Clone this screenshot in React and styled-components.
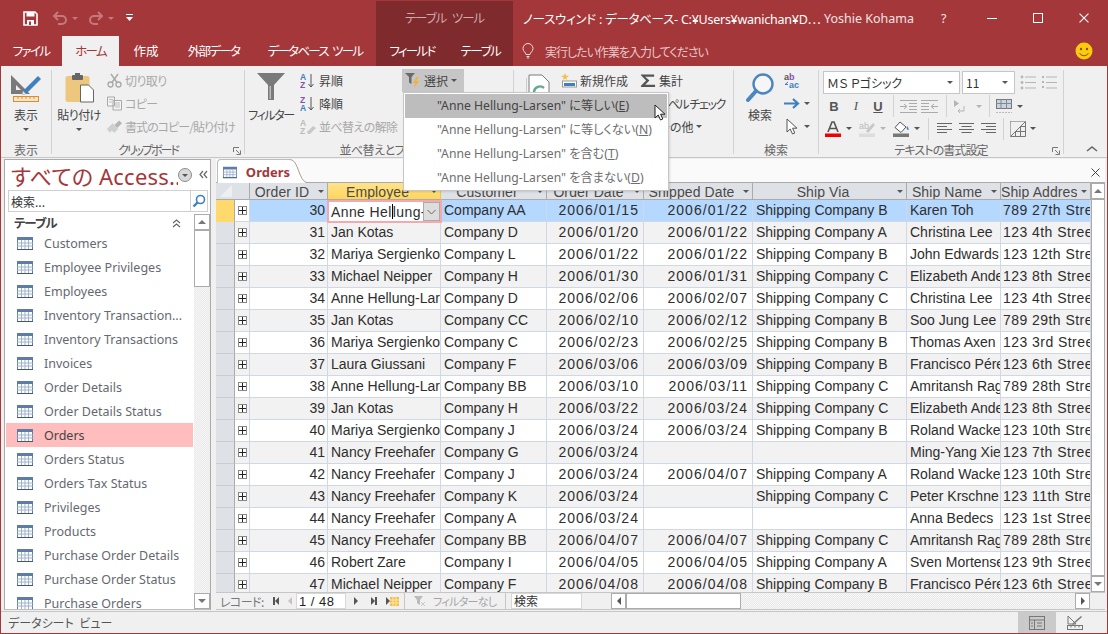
import styled, { createGlobalStyle } from "styled-components";

const RED = "#A4373A";
const UI = `"Noto Sans CJK JP", "Noto Sans", sans-serif`;
const LATIN = `"Noto Sans", "Noto Sans CJK JP", sans-serif`;
const GRID = `"Liberation Sans", "Noto Sans CJK JP", sans-serif`;

const COLS = "19px 15px 78px 113px 106px 97px 109px 154px 94px 90px";

const ROWS = [
    [30, "", "Company AA", "2006/01/15", "2006/01/22", "Shipping Company B", "Karen Toh", "789 27th Street"],
    [31, "Jan Kotas", "Company D", "2006/01/20", "2006/01/22", "Shipping Company A", "Christina Lee", "123 4th Street"],
    [32, "Mariya Sergienko", "Company L", "2006/01/22", "2006/01/22", "Shipping Company B", "John Edwards", "123 12th Street"],
    [33, "Michael Neipper", "Company H", "2006/01/30", "2006/01/31", "Shipping Company C", "Elizabeth Andersen", "123 8th Street"],
    [34, "Anne Hellung-Larsen", "Company D", "2006/02/06", "2006/02/07", "Shipping Company C", "Christina Lee", "123 4th Street"],
    [35, "Jan Kotas", "Company CC", "2006/02/10", "2006/02/12", "Shipping Company B", "Soo Jung Lee", "789 29th Street"],
    [36, "Mariya Sergienko", "Company C", "2006/02/23", "2006/02/25", "Shipping Company B", "Thomas Axen", "123 3rd Street"],
    [37, "Laura Giussani", "Company F", "2006/03/06", "2006/03/09", "Shipping Company B", "Francisco Pérez", "123 6th Street"],
    [38, "Anne Hellung-Larsen", "Company BB", "2006/03/10", "2006/03/11", "Shipping Company C", "Amritansh Raghav", "789 28th Street"],
    [39, "Jan Kotas", "Company H", "2006/03/22", "2006/03/24", "Shipping Company C", "Elizabeth Andersen", "123 8th Street"],
    [40, "Mariya Sergienko", "Company J", "2006/03/24", "2006/03/24", "Shipping Company B", "Roland Wacker", "123 10th Street"],
    [41, "Nancy Freehafer", "Company G", "2006/03/24", "", "", "Ming-Yang Xie", "123 7th Street"],
    [42, "Nancy Freehafer", "Company J", "2006/03/24", "2006/04/07", "Shipping Company A", "Roland Wacker", "123 10th Street"],
    [43, "Nancy Freehafer", "Company K", "2006/03/24", "", "Shipping Company C", "Peter Krschne", "123 11th Street"],
    [44, "Nancy Freehafer", "Company A", "2006/03/24", "", "", "Anna Bedecs", "123 1st Street"],
    [45, "Nancy Freehafer", "Company BB", "2006/04/07", "2006/04/07", "Shipping Company C", "Amritansh Raghav", "789 28th Street"],
    [46, "Robert Zare", "Company I", "2006/04/05", "2006/04/05", "Shipping Company A", "Sven Mortensen", "123 9th Street"],
    [47, "Michael Neipper", "Company F", "2006/04/08", "2006/04/08", "Shipping Company B", "Francisco Pérez", "123 6th Street"],
];

const NAV_ITEMS = [
    "Customers", "Employee Privileges", "Employees", "Inventory Transaction...",
    "Inventory Transactions", "Invoices", "Order Details", "Order Details Status",
    "Orders", "Orders Status", "Orders Tax Status", "Privileges", "Products",
    "Purchase Order Details", "Purchase Order Status", "Purchase Orders",
];

const HEADERS = [
    ["Order ID"], ["Employee", true], ["Customer"], ["Order Date"],
    ["Shipped Date"], ["Ship Via"], ["Ship Name"], ["Ship Address"],
];

const Global = createGlobalStyle`
    html, body { margin: 0; padding: 0; background: #F0F0F0; }
    * { box-sizing: border-box; }
    body { font-family: ${UI}; font-feature-settings: "palt"; }
`;

const Win = styled.div`
    width: 1108px;
    height: 634px;
    display: flex;
    flex-direction: column;
    border: 1px solid ${RED};
    border-top: 0;
    background: #F0F0F0;
    overflow: hidden;
    font-size: 12px;
`;

/* title + tabs */
const Head = styled.header`
    display: flex;
    height: 66px;
    background: ${RED};
    color: #fff;
    margin: 0 -1px;
    flex: none;
`;
const HeadLeft = styled.div`
    width: 376px;
    flex: none;
    display: flex;
    flex-direction: column;
`;
const Qat = styled.div`
    height: 36px;
    display: flex;
    align-items: center;
    padding: 0 0 0 23px;
`;
const QatGap = styled.span`
    display: inline-flex;
    align-items: center;
    margin-left: ${(p) => p.$m}px;
`;
const Tabs = styled.nav`
    display: flex;
    height: 30px;
`;
const Tab = styled.div`
    width: ${(p) => p.$w}px;
    line-height: 30px;
    text-align: center;
    font-size: 12.5px;
    letter-spacing: ${(p) => p.$ls ?? -1.7}px;
    word-spacing: 3px;
    white-space: nowrap;
    color: ${(p) => (p.$on ? RED : "#fff")};
    background: ${(p) => (p.$on ? "#F0F0F0" : "transparent")};
`;
const Context = styled.div`
    width: 137px;
    flex: none;
    margin-top: 1px;
    background: #7F2A2C;
    display: flex;
    flex-direction: column;
`;
const ContextTitle = styled.div`
    height: 35px;
    line-height: 34px;
    text-align: center;
    color: #CFA9AA;
    font-size: 12.5px;
    letter-spacing: -1.1px;
    word-spacing: 4px;
`;
const HeadRight = styled.div`
    flex: 1;
    min-width: 0;
    display: flex;
    flex-direction: column;
`;
const TitleRow = styled.div`
    height: 36px;
    display: flex;
    align-items: center;
    padding-left: 10px;
    font-family: ${LATIN};
    font-size: 12.5px;
    white-space: nowrap;
`;
const DocTitle = styled.div`
    width: 301px;
    flex: none;
    overflow: hidden;
    letter-spacing: -0.25px;
`;
const UserName = styled.div`
    width: 117px;
    flex: none;
    color: #F3E3E3;
`;
const Help = styled.div`
    width: 28px;
    flex: none;
    color: #F3E3E3;
`;
const WinBtn = styled.div`
    width: 46px;
    flex: none;
    display: flex;
    justify-content: center;
`;
const TellRow = styled.div`
    flex: 1;
    display: flex;
    align-items: center;
    padding: 0 15px 0 9px;
    gap: 11px;
    color: #E6C9C9;
    font-size: 12px;
    letter-spacing: -1px;
`;
const TellText = styled.span`
    flex: 1;
`;

/* ribbon */
const Ribbon = styled.section`
    height: 92px;
    flex: none;
    display: flex;
    padding: 4px 0 3px;
    background: #F0F0F0;
    border-bottom: 1px solid #C6C6C6;
    color: #444;
`;
const Group = styled.div`
    width: ${(p) => p.$w}px;
    flex: none;
    display: flex;
    flex-direction: column;
    border-right: 1px solid #D2D2D2;
    position: relative;
`;
const GroupBody = styled.div`
    height: 73px;
    display: flex;
`;
const GroupLabel = styled.div`
    height: 12px;
    line-height: 15px;
    text-align: center;
    color: #666;
    padding-left: ${(p) => p.$pl ?? 0}px;
    letter-spacing: ${(p) => p.$ls ?? 0}px;
    white-space: nowrap;
`;
const Launcher = styled.span`
    position: absolute;
    right: 3px;
    bottom: -1px;
    display: flex;
`;
const BigBtn = styled.div`
    width: ${(p) => p.$w}px;
    margin-left: ${(p) => p.$ml ?? 0}px;
    flex: none;
    display: flex;
    flex-direction: column;
    align-items: center;
    padding-top: 3px;
`;
const BigIcon = styled.div`
    height: 33px;
    display: flex;
    align-items: flex-start;
    justify-content: center;
`;
const BigText = styled.div`
    height: 18px;
    line-height: 18px;
    white-space: nowrap;
    letter-spacing: ${(p) => p.$ls ?? 0}px;
`;
const BigCaret = styled.div`
    height: 10px;
    display: flex;
    align-items: center;
`;
const Col = styled.div`
    width: ${(p) => p.$w}px;
    margin-left: ${(p) => p.$ml ?? 0}px;
    margin-top: -1px;
    flex: none;
    display: flex;
    flex-direction: column;
`;
const SmallBtn = styled.div`
    height: 23px;
    display: flex;
    align-items: center;
    gap: 3px;
    white-space: nowrap;
    letter-spacing: ${(p) => p.$ls ?? 0}px;
    color: ${(p) => (p.$dis ? "#A8A8A8" : "#444")};
`;
const SmallIcon = styled.span`
    width: ${(p) => p.$w ?? 16}px;
    display: flex;
    justify-content: center;
    flex: none;
`;
const PickBtn = styled.div`
    position: relative;
    width: 62px;
    height: 23px;
    display: flex;
    align-items: center;
    gap: 3px;
    padding-left: 3px;
    background: #C6C6C6;
    z-index: 5;
`;
const TextFmt = styled.div`
    display: flex;
    flex-direction: column;
    margin: -1px 0 0 4px;
`;
const ToolRow = styled.div`
    height: ${(p) => p.$h}px;
    display: flex;
    align-items: center;
`;
const FontBox = styled.div`
    width: ${(p) => p.$w}px;
    height: 23px;
    margin-right: 2px;
    display: flex;
    align-items: center;
    justify-content: space-between;
    padding: 0 6px 0 3px;
    background: #fff;
    border: 1px solid #C6C6C6;
    font-size: 12px;
    color: #333;
    white-space: pre;
`;
const Tool = styled.span`
    width: ${(p) => p.$w}px;
    flex: none;
    display: flex;
    justify-content: center;
    align-items: center;
    font: ${(p) => p.$f || "inherit"};
    text-decoration: ${(p) => (p.$u ? "underline" : "none")};
    color: #555;
`;
const ToolSep = styled.span`
    width: 1px;
    height: 22px;
    background: #D2D2D2;
    margin: 0 ${(p) => p.$r}px 0 ${(p) => p.$l}px;
    flex: none;
`;
const Collapse = styled.div`
    flex: 1;
    display: flex;
    align-items: flex-end;
    justify-content: flex-end;
    padding: 0 9px 1px 0;
`;
const Tri = styled.i`
    display: inline-block;
    flex: none;
    width: 0;
    height: 0;
    border-left: ${(p) => p.$s ?? 3}px solid transparent;
    border-right: ${(p) => p.$s ?? 3}px solid transparent;
    border-top: ${(p) => p.$s ?? 3}px solid ${(p) => p.$c || "#555"};
`;

/* filter menu */
const Menu = styled.div`
    position: absolute;
    left: 1px;
    top: 23px;
    width: 266px;
    height: 99px;
    padding: 1px;
    background: #fff;
    border: 1px solid #C6C6C6;
    box-shadow: 1px 1px 2px rgba(0, 0, 0, 0.12);
    z-index: 10;
`;
const MenuItem = styled.div`
    height: 24px;
    line-height: 23px;
    padding-left: 32px;
    font-family: ${LATIN};
    font-size: 12.2px;
    white-space: nowrap;
    background: ${(p) => (p.$on ? "#BDBDBD" : "transparent")};
    color: ${(p) => (p.$on ? "#444" : "#6E6E6E")};
    u { text-underline-offset: 1px; }
`;
const Pointer = styled.span`
    position: absolute;
    left: 250px;
    top: 11px;
    display: flex;
`;

/* workspace */
const Work = styled.main`
    flex: 1;
    min-height: 0;
    display: flex;
    padding: 1px 2px 1px 3px;
    gap: 5px;
`;
const Nav = styled.aside`
    width: 207px;
    flex: none;
    display: flex;
    flex-direction: column;
    background: #fff;
    border: 1px solid #ABABAB;
    border-bottom-color: #BDBDBD;
    padding-left: 1px;
`;
const NavHead = styled.div`
    height: 30px;
    flex: none;
    display: flex;
    align-items: center;
    padding-left: 5px;
    color: ${RED};
    font-family: ${LATIN};
    font-size: 22px;
    white-space: nowrap;
`;
const NavTitle = styled.div`
    width: 167px;
    flex: none;
    overflow: hidden;
    letter-spacing: 0.2px;
`;
const NavMenuDot = styled.span`
    width: 14px;
    height: 14px;
    flex: none;
    border-radius: 50%;
    border: 1px solid #8C8C8C;
    background: #D9D9D9;
    display: flex;
    align-items: center;
    justify-content: center;
`;
const NavClose = styled.span`
    margin-left: 6px;
    display: flex;
`;
const NavSearch = styled.div`
    height: 22px;
    flex: none;
    margin: 0 2px 0 2px;
    display: flex;
    align-items: center;
    justify-content: space-between;
    border: 1px solid #D0D0D0;
    padding-left: 2px;
    color: #333;
    font-size: 12px;
`;
const NavSearchBtn = styled.span`
    width: 17px;
    height: 100%;
    border-left: 1px solid #D0D0D0;
    display: flex;
    align-items: center;
    justify-content: center;
`;
const NavBody = styled.div`
    flex: 1;
    min-height: 0;
    display: flex;
    margin-top: 2px;
`;
const NavList = styled.div`
    flex: 1;
    min-width: 0;
    overflow: hidden;
    padding-right: 1px;
`;
const NavSection = styled.div`
    height: 17px;
    display: flex;
    align-items: center;
    justify-content: space-between;
    padding: 0 11px 0 8px;
    font-weight: 700;
    font-size: 12.5px;
    letter-spacing: -1px;
    color: #444;
`;
const NavItem = styled.div`
    height: 24px;
    display: flex;
    align-items: center;
    gap: 11px;
    padding-left: 11px;
    font-family: ${LATIN};
    font-size: 12.5px;
    white-space: nowrap;
    color: ${(p) => (p.$on ? "#444" : "#666870")};
    background: ${(p) => (p.$on ? "#FFBDBE" : "transparent")};
`;
const VBar = styled.div`
    width: ${(p) => p.$w}px;
    flex: none;
    display: flex;
    flex-direction: column;
    background: repeating-conic-gradient(#E9E9E9 0 25%, #F7F7F7 0 50%) 0 0 / 2px 2px;
`;
const VArrow = styled.div`
    height: 16px;
    flex: none;
    background: #fff;
    border: 1px solid #ABABAB;
    display: flex;
    align-items: center;
    justify-content: center;
`;
const UpTri = styled(Tri)`
    border-top: 0;
    border-bottom: 4px solid #777;
    border-left-width: 4px;
    border-right-width: 4px;
`;
const VThumb = styled.div`
    height: ${(p) => p.$h};
    flex: ${(p) => (p.$h ? "none" : 1)};
    background: #fff;
    border: 1px solid #ABABAB;
`;
const VSpace = styled.div`
    flex: 1;
`;

const Doc = styled.div`
    flex: 1;
    min-width: 0;
    display: flex;
    flex-direction: column;
`;
const DocTabs = styled.div`
    height: 24px;
    flex: none;
    display: flex;
    align-items: flex-end;
    background: #FAFAFA;
    border-bottom: 1px solid #ABABAB;
    padding-left: 1px;
`;
const DocTab = styled.div`
    height: 24px;
    width: 73px;
    display: flex;
    align-items: center;
    gap: 9px;
    padding: 1px 0 0 5px;
    background: #fff;
    border: 1px solid #BDBDBD;
    border-right: 0;
    border-bottom: 0;
    border-radius: 4px 0 0 0;
    color: ${RED};
    font-family: ${LATIN};
    font-weight: 700;
    font-size: 13px;
    margin-bottom: -1px;
`;
const DocTabEnd = styled.svg`
    width: 18px;
    height: 24px;
    margin-bottom: -1px;
    flex: none;
`;
const DocClose = styled.span`
    margin: 0 5px 5px auto;
    display: flex;
`;
const DataArea = styled.div`
    flex: 1;
    min-height: 0;
    display: flex;
`;
const Sheet = styled.div`
    flex: 1;
    min-width: 0;
    overflow: hidden;
    font-family: ${GRID};
    font-size: 14px;
    color: #2E2E2E;
`;
const Row = styled.div`
    height: ${(p) => p.$h}px;
    display: grid;
    grid-template-columns: ${COLS};
`;
const Hd = styled.div`
    display: flex;
    align-items: center;
    background: ${(p) => (p.$on ? "linear-gradient(#FFE38A, #FFD65C)" : "#DEE1E6")};
    border-right: 1px solid ${(p) => (p.$on ? "#E8C65A" : "#ABABAB")};
    border-bottom: 1px solid #ABABAB;
    color: #4A4A4A;
    overflow: hidden;
    white-space: nowrap;
`;
const HdText = styled.span`
    flex: 1;
    min-width: 0;
    overflow: hidden;
    text-align: center;
    padding-top: 1px;
    letter-spacing: 0.1px;
`;
const HdCaret = styled.span`
    width: 13px;
    flex: none;
    display: flex;
    justify-content: center;
`;
const Corner = styled.div`
    grid-column: span 2;
    background: #DEE1E6;
    border-right: 1px solid #ABABAB;
    border-bottom: 1px solid #ABABAB;
    display: flex;
    padding: 2px 0 0 3px;
`;
const Selector = styled.div`
    background: ${(p) => (p.$on ? "#FFD96B" : "#DEE1E6")};
    border-right: 1px solid #ABABAB;
    border-bottom: 1px solid ${(p) => (p.$on ? "#FFD96B" : "#C8CCD4")};
`;
const Expand = styled.div`
    background: ${(p) => (p.$alt ? "#F2F2F2" : "#fff")};
    border-right: 1px solid #D0D7E5;
    border-bottom: 1px solid #D0D7E5;
    display: flex;
    align-items: center;
    justify-content: center;
`;
const PlusBox = styled.span`
    width: 9px;
    height: 9px;
    display: flex;
    background: #fff;
    border: 1px solid #888;
`;
const Cell = styled.div`
    background: ${(p) => (p.$sel ? "#B4D8FF" : p.$alt ? "#F2F2F2" : "#fff")};
    border-right: 1px solid #D0D7E5;
    border-bottom: 1px solid #D0D7E5;
    line-height: 21px;
    padding: 0 ${(p) => p.$pr ?? 2}px 0 ${(p) => p.$pl ?? 3}px;
    letter-spacing: ${(p) => p.$ls ?? 0}px;
    text-align: ${(p) => (p.$right ? "right" : "left")};
    white-space: nowrap;
    overflow: hidden;
`;
const EditCell = styled.div`
    position: relative;
    margin: 0 -1px -1px;
    height: 23px;
    background: #fff;
    border: 2px solid #F4A9AE;
    display: flex;
    align-items: center;
    z-index: 1;
`;
const EditText = styled.div`
    flex: 1;
    min-width: 0;
    overflow: hidden;
    white-space: nowrap;
    padding-left: 2px;
    letter-spacing: 0.4px;
`;
const EditCaret = styled.span`
    display: inline-block;
    width: 1px;
    height: 15px;
    background: #000;
    vertical-align: -2px;
`;
const EditDrop = styled.div`
    width: 17px;
    height: 19px;
    flex: none;
    background: #DDDDDD;
    border: 1px solid #ABABAB;
    display: flex;
    align-items: center;
    justify-content: center;
`;

const RecBar = styled.div`
    height: 18px;
    flex: none;
    display: flex;
    align-items: center;
    background: #F0F0F0;
    border-top: 1px solid #C6C6C6;
    border-bottom: 1px solid #C6C6C6;
    color: #777;
    white-space: nowrap;
`;
const RecLabel = styled.span`
    width: 51px;
    padding-left: 4px;
    font-size: 12px;
    letter-spacing: -0.6px;
    flex: none;
`;
const RecBtn = styled.span`
    width: ${(p) => p.$w}px;
    flex: none;
    display: flex;
    justify-content: center;
`;
const RecBox = styled.div`
    width: 50px;
    height: 16px;
    flex: none;
    background: #fff;
    border: 1px solid #D8D8D8;
    font-family: ${GRID};
    font-size: 13px;
    line-height: 15px;
    padding-left: 2px;
    color: #222;
    letter-spacing: 0.5px;
`;
const RecFilter = styled.div`
    width: 102px;
    height: 16px;
    flex: none;
    display: flex;
    align-items: center;
    gap: 7px;
    padding-left: 9px;
    border-left: 1px solid #C6C6C6;
    border-right: 1px solid #C6C6C6;
    color: #A5A5A5;
    font-size: 11px;
    letter-spacing: -0.7px;
`;
const RecSearch = styled.div`
    width: 71px;
    height: 16px;
    margin: 0 29px 0 5px;
    flex: none;
    background: #fff;
    border: 1px solid #D8D8D8;
    padding-left: 2px;
    line-height: 14px;
    color: #333;
    font-size: 12px;
`;
const HBar = styled.div`
    flex: 1;
    min-width: 0;
    height: 16px;
    display: flex;
    background: repeating-conic-gradient(#E9E9E9 0 25%, #F7F7F7 0 50%) 0 0 / 2px 2px;
    margin-right: 15px;
`;
const HArrow = styled.div`
    width: 15px;
    flex: none;
    background: #fff;
    border: 1px solid #ABABAB;
    display: flex;
    align-items: center;
    justify-content: center;
`;
const HThumb = styled.div`
    width: 115px;
    flex: none;
    background: #fff;
    border: 1px solid #ABABAB;
`;
const HSpace = styled.div`
    flex: 1;
`;
const SideTri = styled.i`
    display: inline-block;
    width: 0;
    height: 0;
    border-top: 4px solid transparent;
    border-bottom: 4px solid transparent;
    border-${(p) => (p.$left ? "right" : "left")}: 4px solid ${(p) => p.$c || "#555"};
`;
const Bars = styled.span`
    display: inline-flex;
    align-items: center;
`;

/* status */
const Status = styled.footer`
    height: 22px;
    flex: none;
    display: flex;
    align-items: center;
    padding-left: 7px;
    border-top: 1px solid #C6C6C6;
    color: #555;
    font-size: 12px;
`;
const StatusText = styled.span`
    flex: 1;
    word-spacing: 3px;
`;
const ViewBtn = styled.span`
    width: 38px;
    height: 21px;
    display: flex;
    align-items: center;
    justify-content: center;
    background: ${(p) => (p.$on ? "#CACACA" : "transparent")};
`;
const ViewEnd = styled.span`
    width: 13px;
`;

/* drawings */
const TableIcon = () => (
    <svg width="16" height="13" viewBox="0 0 16 13">
        <rect x="0.5" y="0.5" width="15" height="12" fill="#fff" stroke="#5F7FA8" />
        <rect x="0" y="0" width="16" height="3" fill="#5D7CA6" />
        <path d="M0 6h16M0 9h16M4.5 3v9M8 3v9M11.5 3v9" stroke="#9DB3D1" />
        <path d="M0 12.5h16" stroke="#3F5877" />
    </svg>
);
const SaveIcon = () => (
    <svg width="15" height="15" viewBox="0 0 15 15">
        <path d="M1 1h11l2 2v11H1z" fill="none" stroke="#fff" strokeWidth="1.6" />
        <rect x="3.5" y="1" width="8" height="4.5" fill="#fff" />
        <rect x="4" y="9" width="7" height="5" fill="#fff" />
        <rect x="6" y="10.5" width="2" height="3.5" fill="#A4373A" />
    </svg>
);
const UndoIcon = ({ flip }) => (
    <svg width="16" height="14" viewBox="0 0 16 14" style={flip ? { transform: "scaleX(-1)" } : undefined}>
        <path d="M3 5h7a4 4 0 0 1 0 8H6" fill="none" stroke="#C5797B" strokeWidth="2" />
        <path d="M6 1 2 5l4 4" fill="none" stroke="#C5797B" strokeWidth="2" />
    </svg>
);
const QatMore = () => (
    <svg width="7" height="8" viewBox="0 0 7 8">
        <path d="M0 .5h7" stroke="#fff" />
        <path d="M0 3h7L3.5 7z" fill="#fff" />
    </svg>
);
const Bulb = () => (
    <svg width="12" height="16" viewBox="0 0 12 16">
        <path d="M4 11.5c0-2-3-3-3-6a5 5 0 0 1 10 0c0 3-3 4-3 6z" fill="none" stroke="#F0DCDC" />
        <path d="M4.5 13.5h3M5 15h2" stroke="#F0DCDC" />
    </svg>
);
const Smile = () => (
    <svg width="18" height="18" viewBox="0 0 18 18">
        <circle cx="9" cy="9" r="8.5" fill="#FFC90E" />
        <circle cx="6" cy="7" r="1.2" fill="#7A5A00" />
        <circle cx="12" cy="7" r="1.2" fill="#7A5A00" />
        <path d="M4.5 11a5 5 0 0 0 9 0" fill="none" stroke="#7A5A00" />
    </svg>
);
const DesignIcon = () => (
    <svg width="32" height="30" viewBox="0 0 32 30">
        <path d="M1 2v19h19z" fill="#7A7A7A" />
        <path d="M6 12v5h5z" fill="#F0F0F0" />
        <path d="M13 18 28 3l3 3-15 15-4 1z" fill="#3E80C0" />
        <path d="M13 18l3 3-4 1z" fill="#F0E0C0" />
        <rect x="3.5" y="23.5" width="25" height="5" fill="#FBE7C9" stroke="#E08A2E" />
        <path d="M8 24v2M12 24v2M16 24v2M20 24v2M24 24v2" stroke="#E08A2E" />
    </svg>
);
const PasteIcon = () => (
    <svg width="29" height="30" viewBox="0 0 29 30">
        <rect x="0.5" y="3" width="24" height="26" rx="2" fill="#EDC77D" />
        <rect x="7" y="2" width="11" height="5" rx="1" fill="#666" />
        <rect x="10" y="0" width="5" height="3" fill="#666" />
        <path d="M15.5 12h8l5 5v12h-13z" fill="#fff" stroke="#666" />
    </svg>
);
const Scissors = () => (
    <svg width="15" height="15" viewBox="0 0 15 15">
        <circle cx="3.5" cy="11.5" r="2.5" fill="none" stroke="#A8A8A8" strokeWidth="1.3" />
        <circle cx="11.5" cy="11.5" r="2.5" fill="none" stroke="#A8A8A8" strokeWidth="1.3" />
        <path d="M5 9.5 11 1M10 9.5 4 1" stroke="#A8A8A8" strokeWidth="1.4" />
    </svg>
);
const CopyIcon = () => (
    <svg width="15" height="15" viewBox="0 0 15 15">
        <path d="M.5 1h7v9h-7zM6 4.5h8.5V14H6z" fill="#F4F4F4" stroke="#A8A8A8" />
        <path d="M2 3.5h4M2 6h3M8 7h5M8 9h5M8 11h5" stroke="#BDBDBD" />
    </svg>
);
const BrushIcon = () => (
    <svg width="17" height="14" viewBox="0 0 17 14">
        <path d="M9 5 14 0l3 3-5 5z" fill="#B5B5B5" />
        <path d="M1 9l6-6 6 6-4 4-3-2-2 2z" fill="#CFCFCF" />
    </svg>
);
const Funnel = () => (
    <svg width="28" height="28" viewBox="0 0 28 28">
        <path d="M0 0h28L17 12v15h-6V12z" fill="#7A7A7A" />
        <path d="M12.5 13v13h1.5V13z" fill="#BDBDBD" />
    </svg>
);
const SortIcon = ({ top, bottom, topColor, bottomColor, noArrow }) => (
    <svg width="16" height="16" viewBox="0 0 16 16">
        <text x="0" y="7" fontSize="8.5" fontWeight="700" fontFamily="Liberation Sans" fill={topColor}>{top}</text>
        <text x="0" y="15" fontSize="8.5" fontWeight="700" fontFamily="Liberation Sans" fill={bottomColor}>{bottom}</text>
        {!noArrow && <path d="M11 1v13M8.5 11l2.5 3 2.5-3" fill="none" stroke="#555" />}
        {noArrow && <path d="M7 13l6-6 3 2-6 6H8z" fill="#C8C8C8" />}
    </svg>
);
const PickIcon = () => (
    <svg width="16" height="15" viewBox="0 0 16 15">
        <path d="M0 0h10L6.5 4v7L4 9.5V4z" fill="#6A6A6A" />
        <path d="M11.5 4 8 10h2.5L9 15l5-7h-2.5L13.5 4z" fill="#F2B233" />
    </svg>
);
const RefreshIcon = () => (
    <svg width="26" height="30" viewBox="0 0 26 30">
        <path d="M3 2h13l7 7v19H3z" fill="#fff" stroke="#7A7A7A" />
        <path d="M0 5v25h18" fill="none" stroke="#AAA" />
        <path d="M8 19a6 6 0 0 1 10-4M18 19a6 6 0 0 1-10 4" fill="none" stroke="#62A98A" strokeWidth="2.4" />
    </svg>
);
const NewIcon = () => (
    <svg width="16" height="15" viewBox="0 0 16 15">
        <path d="M4 0l1 2.5L8 3 5.5 4.5 6 7 4 5.5 2 7l.5-2.5L0 3l3-.5z" fill="#F2C04C" />
        <rect x="1.5" y="8" width="14" height="6" fill="#fff" stroke="#999" />
        <rect x="3" y="10" width="11" height="3" fill="#3F7FBF" />
    </svg>
);
const Sigma = () => (
    <svg width="17" height="15" viewBox="0 0 17 15">
        <path d="M1 1h14v2.5H5.5L10 7.5 5.5 12H16v2.5H1v-1.5L6.5 7.5 1 2z" fill="#555" />
    </svg>
);
const Lens = () => (
    <svg width="28" height="30" viewBox="0 0 28 30">
        <circle cx="17" cy="11" r="9.5" fill="#fff" fillOpacity="0.4" stroke="#4C86BE" strokeWidth="2.4" />
        <path d="M10 18 2 27" stroke="#4C86BE" strokeWidth="4" strokeLinecap="round" />
    </svg>
);
const ReplaceIcon = () => (
    <svg width="17" height="16" viewBox="0 0 17 16">
        <text x="0" y="7" fontSize="9" fontWeight="700" fontFamily="Liberation Sans" fill="#555">a<tspan fill="#8552A8">b</tspan></text>
        <text x="5" y="15" fontSize="9" fontWeight="700" fontFamily="Liberation Sans" fill="#3F7FBF">ac</text>
        <path d="M4 9 1 11.5h3" fill="none" stroke="#3F7FBF" />
    </svg>
);
const GoIcon = () => (
    <svg width="16" height="11" viewBox="0 0 16 11">
        <path d="M0 5.5h13M9 1l5 4.5L9 10" fill="none" stroke="#3F7FBF" strokeWidth="2.2" />
    </svg>
);
const CursorIcon = ({ fill = "#fff", stroke = "#555" }) => (
    <svg width="13" height="17" viewBox="0 0 13 17">
        <path d="M1 1v13l3.2-3 2.3 5 2.3-1-2.2-4.8H11z" fill={fill} stroke={stroke} />
    </svg>
);
const BulletIcon = ({ nums }) => (
    <svg width="16" height="15" viewBox="0 0 16 15">
        {nums ? (
            <path d="M1 2h2M1 7h2M1 12h2" stroke="#B5B5B5" strokeWidth="2" />
        ) : (
            <>
                <circle cx="2" cy="2" r="1.4" fill="#B5B5B5" />
                <circle cx="2" cy="7.5" r="1.4" fill="#B5B5B5" />
                <circle cx="2" cy="13" r="1.4" fill="#B5B5B5" />
            </>
        )}
        <path d="M5 2h11M5 7.5h11M5 13h11" stroke="#B5B5B5" />
    </svg>
);
const IndentIcon = ({ flip }) => (
    <svg width="17" height="13" viewBox="0 0 17 13" style={flip ? { transform: "scaleX(-1)" } : undefined}>
        <path d="M0 .5h17M9 3.5h8M9 6.5h8M9 9.5h8M0 12.5h17" stroke="#AAA" />
        <path d="M0 6.5h6M4 4l3 2.5L4 9" fill="none" stroke="#AAA" />
    </svg>
);
const RtlIcon = () => (
    <svg width="12" height="15" viewBox="0 0 12 15">
        <path d="M0 1l5 3.5L0 8z" fill="#B5B5B5" />
        <path d="M10 7v5H4M6 10l-2 2 2 2" fill="none" stroke="#B5B5B5" />
    </svg>
);
const GridIcon = () => (
    <svg width="16" height="15" viewBox="0 0 16 15">
        <rect x="0.5" y="0.5" width="15" height="9" fill="#C6D4E4" stroke="#777" />
        <path d="M0 4.5h16M5 0v10M10.5 0v10" stroke="#888" />
        <path d="M0 13.5h16" stroke="#BBB" strokeDasharray="2 1" />
    </svg>
);
const FontColor = () => (
    <svg width="16" height="16" viewBox="0 0 16 16">
        <path d="M3 11 7 1h2l4 10M5 7.5h6" fill="none" stroke="#555" strokeWidth="1.6" />
        <rect x="0" y="12.5" width="16" height="3.5" fill="#F00000" />
    </svg>
);
const HighlightIcon = () => (
    <svg width="17" height="16" viewBox="0 0 17 16">
        <text x="0" y="8" fontSize="9" fontFamily="Liberation Sans" fill="#BBB">ab</text>
        <path d="M7 10 14 2l2 2-7 8z" fill="#C8C8C8" />
        <rect x="0" y="12.5" width="16" height="3.5" fill="#DDD" />
    </svg>
);
const FillIcon = () => (
    <svg width="17" height="16" viewBox="0 0 17 16">
        <path d="M7 1l6 5-5 5.5-6-5z" fill="#fff" stroke="#555" />
        <path d="M14 5c2 2 2 4 1 4s-2-2-1-4z" fill="#3F7FBF" />
        <rect x="0" y="12.5" width="16" height="3.5" fill="#777" />
    </svg>
);
const AlignIcon = ({ d }) => (
    <svg width="15" height="11" viewBox="0 0 15 11">
        <path d={d} stroke="#666" fill="none" />
    </svg>
);
const BorderIcon = () => (
    <svg width="16" height="16" viewBox="0 0 16 16">
        <path d="M.5.5h15" stroke="#666" strokeDasharray="1 1" />
        <path d="M.5.5v15" stroke="#666" strokeDasharray="1 1" />
        <path d="M.5 15.5h15v-15M15 1 1 15M5.5 15V10.5h10M10.5 15V5.5h5" fill="none" stroke="#777" />
    </svg>
);
const LauncherIcon = () => (
    <svg width="8" height="8" viewBox="0 0 8 8">
        <path d="M.5 5V.5H6" fill="none" stroke="#777" />
        <path d="M3 3l3.5 3.5M7.5 3.5v4h-4" fill="none" stroke="#777" />
    </svg>
);
const Chevrons = ({ dir, c = "#666", double = true }) => {
    const paths = {
        up: "M1 5 4.5 2 8 5M1 9l3.5-3L8 9",
        left: "M5 1 2 4.5 5 8M9 1 6 4.5 9 8",
        one: "M1 6l5-4 5 4",
    };
    return (
        <svg width={double ? 10 : 12} height={double ? 10 : 8} viewBox={double ? "0 0 10 10" : "0 0 12 8"}>
            <path d={paths[dir]} fill="none" stroke={c} strokeWidth={double ? 1.2 : 1.6} />
        </svg>
    );
};
const CloseX = ({ c = "#444", s = 9 }) => (
    <svg width={s} height={s} viewBox="0 0 9 9">
        <path d="M.5.5l8 8M8.5.5l-8 8" stroke={c} />
    </svg>
);
const NavSearchIcon = () => (
    <svg width="14" height="14" viewBox="0 0 14 14">
        <circle cx="8.5" cy="5.5" r="4" fill="none" stroke="#3F7FBF" strokeWidth="1.6" />
        <path d="M5.5 8.5 1.5 12.5" stroke="#3F7FBF" strokeWidth="2.4" />
    </svg>
);
const Plus = () => (
    <svg width="7" height="7" viewBox="0 0 7 7">
        <path d="M0 3.5h7M3.5 0v7" stroke="#222" />
    </svg>
);
const CornerMark = () => (
    <svg width="14" height="13" viewBox="0 0 14 13">
        <path d="M13 0v12H1z" fill="#EDEFF2" />
    </svg>
);
const DropChevron = () => (
    <svg width="9" height="6" viewBox="0 0 9 6">
        <path d="M.5 1l4 4 4-4" fill="none" stroke="#666" />
    </svg>
);
const FilterGhost = () => (
    <svg width="12" height="12" viewBox="0 0 12 12">
        <path d="M0 1h9L6 5v5L3 8V5z" fill="#BBB" />
        <path d="M7 7l4 4M11 7l-4 4" stroke="#C9C9C9" />
    </svg>
);
const NewRecord = () => (
    <Bars>
        <SideTri $c="#555" />
        <svg width="9" height="9" viewBox="0 0 9 9">
            <rect width="9" height="9" fill="#F2C04C" />
            <path d="M3 0v9M6 0v9M0 3h9M0 6h9" stroke="#FBE7A8" />
        </svg>
    </Bars>
);
const EdgeBar = () => (
    <svg width="2" height="8" viewBox="0 0 2 8">
        <rect width="2" height="8" fill="#555" />
    </svg>
);
const SheetViewIcon = () => (
    <svg width="16" height="14" viewBox="0 0 16 14">
        <rect x="0.5" y="0.5" width="15" height="13" fill="none" stroke="#777" />
        <path d="M0 4h16M5.5 4v10M8 7h5M8 10h5M2 7h2M2 10h2" stroke="#777" />
    </svg>
);
const DesignViewIcon = () => (
    <svg width="16" height="15" viewBox="0 0 16 15">
        <path d="M1 1v8h8z" fill="none" stroke="#777" />
        <path d="M6 8l8-7 1 1-8 7-2 1z" fill="#777" />
        <rect x="0.5" y="10.5" width="15" height="4" fill="none" stroke="#777" />
        <path d="M4 11v1.5M8 11v1.5M12 11v1.5" stroke="#777" />
    </svg>
);

function App() {
    return (
        <>
            <Global />
            <Win>
                <Head>
                    <HeadLeft>
                        <Qat>
                            <SaveIcon />
                            <QatGap $m={14}><UndoIcon /></QatGap>
                            <QatGap $m={4}><Tri $c="#C5797B" /></QatGap>
                            <QatGap $m={10}><UndoIcon flip /></QatGap>
                            <QatGap $m={4}><Tri $c="#C5797B" /></QatGap>
                            <QatGap $m={12}><QatMore /></QatGap>
                        </Qat>
                        <Tabs>
                            <Tab $w={62}>ファイル</Tab>
                            <Tab $w={57} $on>ホーム</Tab>
                            <Tab $w={54} $ls={0}>作成</Tab>
                            <Tab $w={81}>外部データ</Tab>
                            <Tab $w={122}>データベース ツール</Tab>
                        </Tabs>
                    </HeadLeft>
                    <Context>
                        <ContextTitle>テーブル ツール</ContextTitle>
                        <Tabs>
                            <Tab $w={72}>フィールド</Tab>
                            <Tab $w={65} $ls={-1.4}>テーブル</Tab>
                        </Tabs>
                    </Context>
                    <HeadRight>
                        <TitleRow>
                            <DocTitle>ノースウィンド : データベース- C:¥Users¥wanichan¥D⋯</DocTitle>
                            <UserName>Yoshie Kohama</UserName>
                            <Help>?</Help>
                            <WinBtn><svg width="10" height="10" viewBox="0 0 10 10"><path d="M0 5.5h10" stroke="#fff" /></svg></WinBtn>
                            <WinBtn><svg width="10" height="10" viewBox="0 0 10 10"><rect x=".5" y=".5" width="9" height="9" fill="none" stroke="#fff" /></svg></WinBtn>
                            <WinBtn><CloseX c="#fff" s={10} /></WinBtn>
                        </TitleRow>
                        <TellRow>
                            <Bulb />
                            <TellText>実行したい作業を入力してください</TellText>
                            <Smile />
                        </TellRow>
                    </HeadRight>
                </Head>

                <Ribbon>
                    <Group $w={51}>
                        <GroupBody>
                            <BigBtn $w={50}>
                                <BigIcon><DesignIcon /></BigIcon>
                                <BigText>表示</BigText>
                                <BigCaret><Tri /></BigCaret>
                            </BigBtn>
                        </GroupBody>
                        <GroupLabel>表示</GroupLabel>
                    </Group>

                    <Group $w={193}>
                        <GroupBody>
                            <BigBtn $w={48} $ml={3}>
                                <BigIcon><PasteIcon /></BigIcon>
                                <BigText $ls={-0.6}>貼り付け</BigText>
                                <BigCaret><Tri /></BigCaret>
                            </BigBtn>
                            <Col $w={130} $ml={3}>
                                <SmallBtn $dis $ls={-0.6}><SmallIcon><Scissors /></SmallIcon>切り取り</SmallBtn>
                                <SmallBtn $dis $ls={-0.6}><SmallIcon><CopyIcon /></SmallIcon>コピー</SmallBtn>
                                <SmallBtn $dis $ls={-0.95}><SmallIcon><BrushIcon /></SmallIcon>書式のコピー/貼り付け</SmallBtn>
                            </Col>
                        </GroupBody>
                        <GroupLabel $ls={-2}>クリップボード</GroupLabel>
                        <Launcher><LauncherIcon /></Launcher>
                    </Group>

                    <Group $w={269}>
                        <GroupBody>
                            <BigBtn $w={46} $ml={3}>
                                <BigIcon><Funnel /></BigIcon>
                                <BigText $ls={-1.4}>フィルター</BigText>
                            </BigBtn>
                            <Col $w={102} $ml={6}>
                                <SmallBtn><SmallIcon><SortIcon top="A" bottom="Z" topColor="#3F7FBF" bottomColor="#8552A8" /></SmallIcon>昇順</SmallBtn>
                                <SmallBtn><SmallIcon><SortIcon top="Z" bottom="A" topColor="#8552A8" bottomColor="#3F7FBF" /></SmallIcon>降順</SmallBtn>
                                <SmallBtn $dis $ls={-0.6}><SmallIcon><SortIcon top="A" bottom="Z" topColor="#BBB" bottomColor="#BBB" noArrow /></SmallIcon>並べ替えの解除</SmallBtn>
                            </Col>
                            <Col $w={62}>
                                <PickBtn>
                                    <PickIcon />
                                    選択
                                    <Tri />
                                    <Menu>
                                        <MenuItem $on>"Anne Hellung-Larsen" に等しい(<u>E</u>)</MenuItem>
                                        <MenuItem>"Anne Hellung-Larsen" に等しくない(<u>N</u>)</MenuItem>
                                        <MenuItem>"Anne Hellung-Larsen" を含む(<u>T</u>)</MenuItem>
                                        <MenuItem>"Anne Hellung-Larsen" を含まない(<u>D</u>)</MenuItem>
                                        <Pointer><CursorIcon stroke="#222" /></Pointer>
                                    </Menu>
                                </PickBtn>
                            </Col>
                        </GroupBody>
                        <GroupLabel $pl={26} $ls={-0.5}>並べ替えとフィルター</GroupLabel>
                    </Group>

                    <Group $w={220}>
                        <GroupBody>
                            <BigBtn $w={40} $ml={5}>
                                <BigIcon><RefreshIcon /></BigIcon>
                            </BigBtn>
                            <Col $w={79} $ml={2}>
                                <SmallBtn><SmallIcon><NewIcon /></SmallIcon>新規作成</SmallBtn>
                            </Col>
                            <Col $w={84}>
                                <SmallBtn><SmallIcon><Sigma /></SmallIcon>集計</SmallBtn>
                                <SmallBtn $ls={-1.4}><SmallIcon />スペル チェック</SmallBtn>
                                <SmallBtn><SmallIcon />その他 <Tri /></SmallBtn>
                            </Col>
                        </GroupBody>
                        <GroupLabel>レコード</GroupLabel>
                    </Group>

                    <Group $w={85}>
                        <GroupBody>
                            <BigBtn $w={46} $ml={3}>
                                <BigIcon><Lens /></BigIcon>
                                <BigText>検索</BigText>
                            </BigBtn>
                            <Col $w={34}>
                                <SmallBtn><SmallIcon $w={18}><ReplaceIcon /></SmallIcon></SmallBtn>
                                <SmallBtn><SmallIcon $w={18}><GoIcon /></SmallIcon><Tri /></SmallBtn>
                                <SmallBtn><SmallIcon $w={18}><CursorIcon /></SmallIcon><Tri /></SmallBtn>
                            </Col>
                        </GroupBody>
                        <GroupLabel>検索</GroupLabel>
                    </Group>

                    <Group $w={245}>
                        <GroupBody>
                            <TextFmt>
                                <ToolRow $h={26}>
                                    <FontBox $w={137}>
                                        {"ＭＳ Ｐゴシック"}
                                        <Tri />
                                    </FontBox>
                                    <FontBox $w={53}>
                                        11
                                        <Tri />
                                    </FontBox>
                                    <Tool $w={21}><BulletIcon /></Tool>
                                    <Tool $w={22}><BulletIcon nums /></Tool>
                                </ToolRow>
                                <ToolRow $h={22}>
                                    <Tool $w={22} $f={`700 13px "Liberation Sans"`}>B</Tool>
                                    <Tool $w={22} $f={`italic 13px "Liberation Serif"`}>I</Tool>
                                    <Tool $w={22} $f={`700 13px "Liberation Sans"`} $u>U</Tool>
                                    <ToolSep $l={4} $r={4} />
                                    <Tool $w={21}><IndentIcon /></Tool>
                                    <Tool $w={21}><IndentIcon flip /></Tool>
                                    <ToolSep $l={6} $r={4} />
                                    <Tool $w={18}><RtlIcon /></Tool>
                                    <Tool $w={20}><Tri $c="#B5B5B5" /></Tool>
                                    <ToolSep $l={0} $r={5} />
                                    <Tool $w={18}><GridIcon /></Tool>
                                    <Tool $w={14}><Tri /></Tool>
                                </ToolRow>
                                <ToolRow $h={23}>
                                    <Tool $w={20}><FontColor /></Tool>
                                    <Tool $w={12}><Tri /></Tool>
                                    <Tool $w={2} />
                                    <Tool $w={20}><HighlightIcon /></Tool>
                                    <Tool $w={12}><Tri $c="#B5B5B5" /></Tool>
                                    <Tool $w={2} />
                                    <Tool $w={20}><FillIcon /></Tool>
                                    <Tool $w={12}><Tri /></Tool>
                                    <ToolSep $l={5} $r={4} />
                                    <Tool $w={22}><AlignIcon d="M0 .5h15M0 3.5h10M0 6.5h15M0 9.5h10" /></Tool>
                                    <Tool $w={22}><AlignIcon d="M0 .5h15M2.500 3.5h10M0 6.5h15M2.500 9.5h10" /></Tool>
                                    <Tool $w={22}><AlignIcon d="M0 .5h15M5 3.5h10M0 6.5h15M5 9.5h10" /></Tool>
                                    <ToolSep $l={4} $r={4} />
                                    <Tool $w={20}><BorderIcon /></Tool>
                                    <Tool $w={10}><Tri /></Tool>
                                </ToolRow>
                            </TextFmt>
                        </GroupBody>
                        <GroupLabel $ls={-0.9}>テキストの書式設定</GroupLabel>
                        <Launcher><LauncherIcon /></Launcher>
                    </Group>

                    <Collapse><Chevrons dir="one" double={false} /></Collapse>
                </Ribbon>

                <Work>
                    <Nav>
                        <NavHead>
                            <NavTitle>すべての Access...</NavTitle>
                            <NavMenuDot><Tri $c="#555" /></NavMenuDot>
                            <NavClose><Chevrons dir="left" /></NavClose>
                        </NavHead>
                        <NavSearch>
                            検索...
                            <NavSearchBtn><NavSearchIcon /></NavSearchBtn>
                        </NavSearch>
                        <NavBody>
                            <NavList>
                                <NavSection>
                                    テーブル
                                    <Chevrons dir="up" />
                                </NavSection>
                                {NAV_ITEMS.map((name) => (
                                    <NavItem key={name} $on={name === "Orders"}>
                                        <TableIcon />
                                        {name}
                                    </NavItem>
                                ))}
                            </NavList>
                            <VBar $w={16}>
                                <VArrow><UpTri /></VArrow>
                                <VThumb $h="57px" />
                                <VSpace />
                                <VArrow><Tri $s={4} $c="#777" /></VArrow>
                            </VBar>
                        </NavBody>
                    </Nav>

                    <Doc>
                        <DocTabs>
                            <DocTab>
                                <TableIcon />
                                Orders
                            </DocTab>
                            <DocTabEnd viewBox="0 0 18 24">
                                <path d="M0 .5C9 .5 8 23 18 24H0z" fill="#fff" />
                                <path d="M0 .5C9 .5 8 23 18 24" fill="none" stroke="#A8A090" />
                            </DocTabEnd>
                            <DocClose><CloseX /></DocClose>
                        </DocTabs>
                        <DataArea>
                            <Sheet>
                                <Row $h={17}>
                                    <Corner><CornerMark /></Corner>
                                    {HEADERS.map(([label, on]) => (
                                        <Hd key={label} $on={on}>
                                            <HdText>{label}</HdText>
                                            <HdCaret><Tri /></HdCaret>
                                        </Hd>
                                    ))}
                                </Row>
                                {ROWS.map((r, i) => {
                                    const sel = i === 0;
                                    const alt = i % 2 === 1;
                                    return (
                                        <Row key={r[0]} $h={22}>
                                            <Selector $on={sel} />
                                            <Expand $alt={alt && !sel}><PlusBox><Plus /></PlusBox></Expand>
                                            <Cell $sel={sel} $alt={alt} $right>{r[0]}</Cell>
                                            {sel ? (
                                                <EditCell>
                                                    <EditText>Anne Hel<EditCaret />lung-Larsen</EditText>
                                                    <EditDrop><DropChevron /></EditDrop>
                                                </EditCell>
                                            ) : (
                                                <Cell $alt={alt}>{r[1]}</Cell>
                                            )}
                                            <Cell $sel={sel} $alt={alt}>{r[2]}</Cell>
                                            <Cell $sel={sel} $alt={alt} $right $pr={4} $ls={1.05}>{r[3]}</Cell>
                                            <Cell $sel={sel} $alt={alt} $right $pr={4} $ls={1.05}>{r[4]}</Cell>
                                            <Cell $sel={sel} $alt={alt}>{r[5]}</Cell>
                                            <Cell $sel={sel} $alt={alt}>{r[6]}</Cell>
                                            <Cell $sel={sel} $alt={alt} $pl={2} $ls={0.45}>{r[7]}</Cell>
                                        </Row>
                                    );
                                })}
                            </Sheet>
                            <VBar $w={14}>
                                <VArrow><UpTri /></VArrow>
                                <VThumb />
                                <VArrow><Tri $s={4} $c="#777" /></VArrow>
                            </VBar>
                        </DataArea>
                        <RecBar>
                            <RecLabel>レコード:</RecLabel>
                            <RecBtn $w={17}><Bars><EdgeBar /><SideTri $left $c="#555" /></Bars></RecBtn>
                            <RecBtn $w={12}><SideTri $left $c="#C4C4C4" /></RecBtn>
                            <RecBox>1 / 48</RecBox>
                            <RecBtn $w={20}><SideTri $c="#555" /></RecBtn>
                            <RecBtn $w={15}><Bars><SideTri $c="#555" /><EdgeBar /></Bars></RecBtn>
                            <RecBtn $w={23}><NewRecord /></RecBtn>
                            <RecFilter><FilterGhost />フィルターなし</RecFilter>
                            <RecSearch>検索</RecSearch>
                            <HBar>
                                <HArrow><SideTri $left $c="#555" /></HArrow>
                                <HThumb />
                                <HSpace />
                                <HArrow><SideTri $c="#555" /></HArrow>
                            </HBar>
                        </RecBar>
                    </Doc>
                </Work>

                <Status>
                    <StatusText>データシート ビュー</StatusText>
                    <ViewBtn $on><SheetViewIcon /></ViewBtn>
                    <ViewBtn><DesignViewIcon /></ViewBtn>
                    <ViewEnd />
                </Status>
            </Win>
        </>
    );
}

export default App;
